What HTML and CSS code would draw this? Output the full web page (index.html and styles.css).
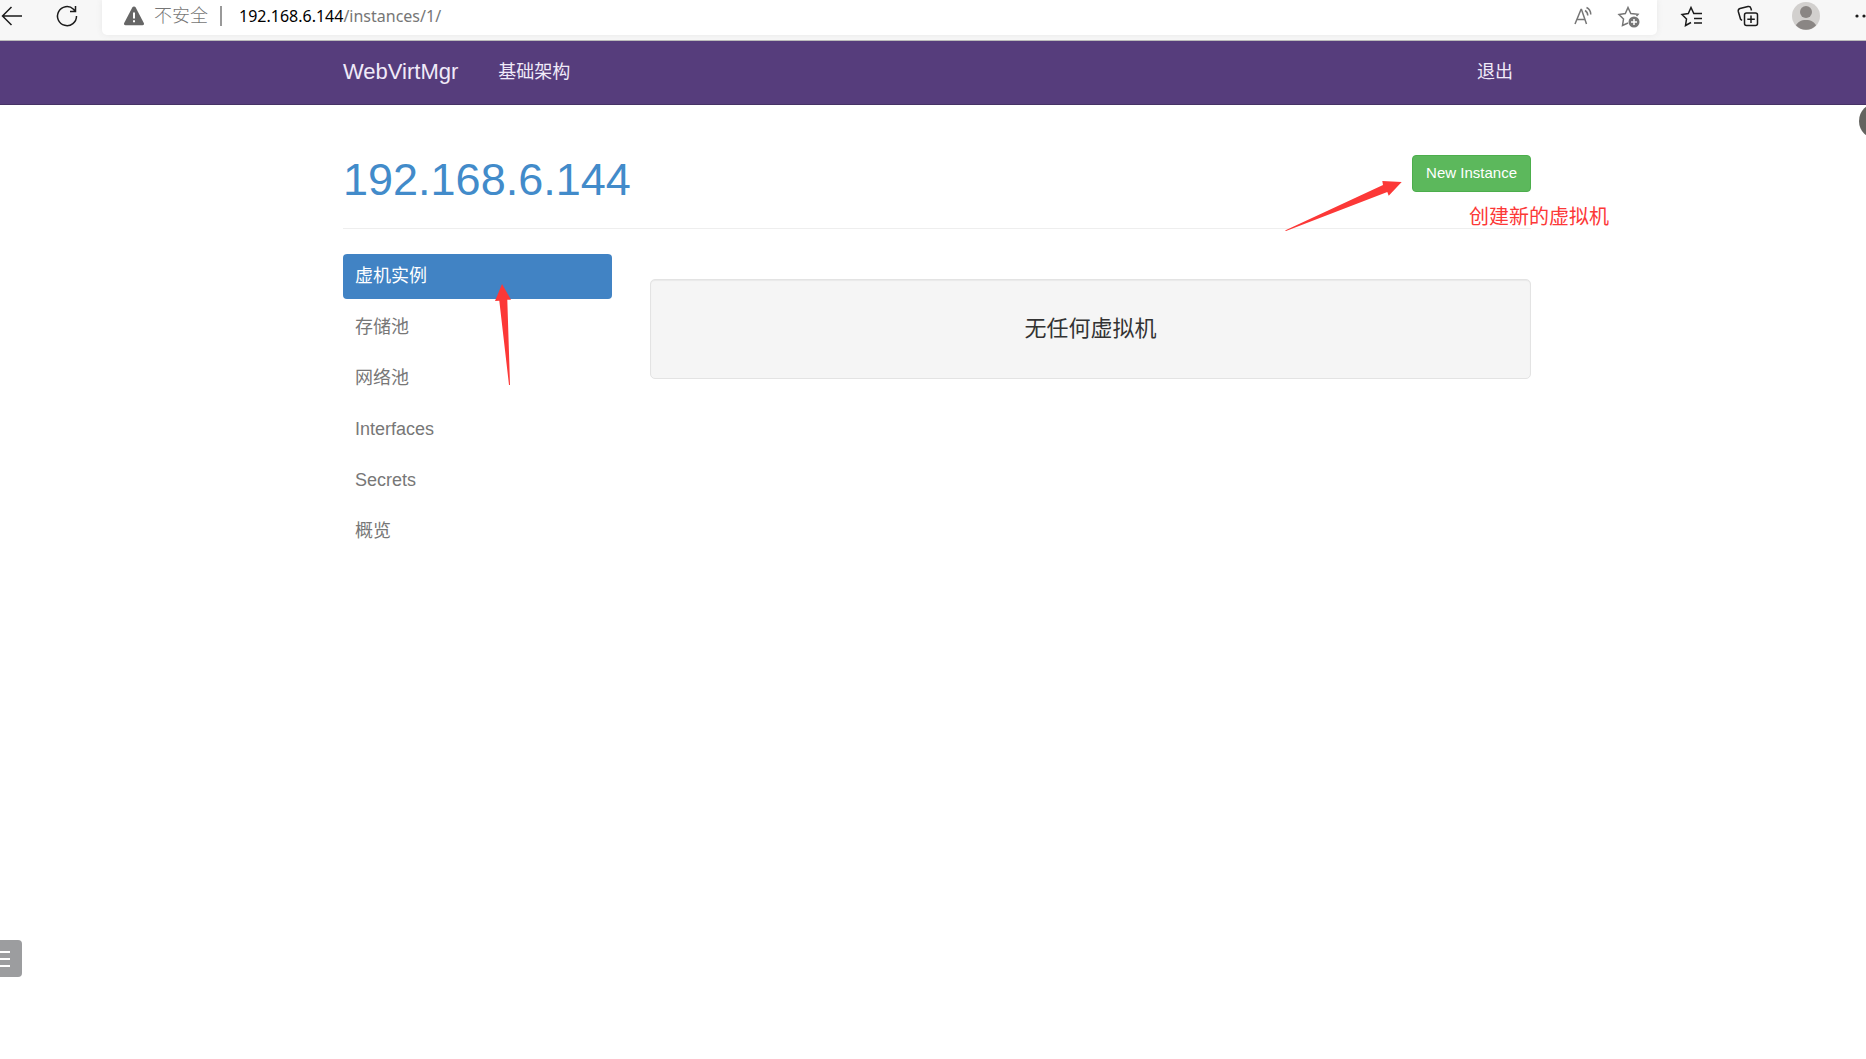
FILE: index.html
```
<!DOCTYPE html>
<html lang="zh-CN">
<head>
    <meta charset="UTF-8">
    <meta name="viewport" content="width=device-width, initial-scale=1.0">
    <title>WebVirtMgr</title>
    <link rel="stylesheet" href="styles.css">
</head>
<body>
<div class="toolbar">
    <div class="toolbar-nav">
        <button class="icon-button" aria-label="后退">
            <svg width="24" height="24" viewBox="0 0 24 24"><path d="M22 12H2.500M11.500 3L2.500 12l9 9"/></svg>
        </button>
        <button class="icon-button" aria-label="刷新">
            <svg width="24" height="24" viewBox="0 0 24 24"><path d="M21.500 12A9.500 9.500 0 1 1 18.500 5.200L20.500 7.500M20.500 2v5.500H15"/></svg>
        </button>
    </div>
    <div class="address-bar">
        <svg class="warning" width="22" height="22" viewBox="0 0 22 22">
            <path class="solid" d="M11 1.500c.8 0 1.300.4 1.700 1L20.800 18c.6 1.200 0 2.300-1.300 2.300h-17C1.200 20.300.6 19.200 1.200 18L9.300 2.500c.4-.6.900-1 1.700-1z"/>
            <path class="mark" d="M11 7.500v6M11 15.300v2"/>
        </svg>
        <span class="insecure">不安全</span>
        <span class="separator"></span>
        <div class="url"><span class="host">192.168.6.144</span>/instances/1/</div>
        <button class="icon-button muted" aria-label="大声朗读">
            <svg width="22" height="24" viewBox="0 0 22 24"><path d="M2 20L8 5.500h.5L13.500 20M4 15.500h8M12 6.500c1.800 1 2.700 2.800 2.800 5M13.500 3.500c2.600 1.300 4.200 3.800 4.300 7"/></svg>
        </button>
        <button class="icon-button muted" aria-label="添加到收藏夹">
            <svg width="24" height="24" viewBox="0 0 24 24">
                <path d="M11 19l-5.500 2.500 1-6.500L2 10.500l6.300-1L11 3.500l2.800 6 7.200.8-1.500 1.700"/>
                <circle class="solid" cx="17" cy="18" r="5.500"/>
                <path class="mark" d="M17 15v6M14 18h6"/>
            </svg>
        </button>
    </div>
    <div class="toolbar-actions">
        <button class="icon-button" aria-label="收藏夹">
            <svg width="24" height="24" viewBox="0 0 24 24"><path d="M11 18.500L5.500 21.500l1-6.500L2 10.500l6.300-1L11 3.500l2.800 6H22M14 14.500h8M14 19h8"/></svg>
        </button>
        <button class="icon-button" aria-label="集锦">
            <svg width="24" height="24" viewBox="0 0 24 24">
                <rect x="8.500" y="9" width="13" height="12.500" rx="2"/>
                <path d="M15 11.500v7.500M11.300 15.200h7.500M6 16.500L4.500 15 2.300 7.500C2 6 2.500 5 4 4.500L12 2.500c1.500-.3 2.500.3 2.800 1.500l.7 2.500"/>
            </svg>
        </button>
        <button class="icon-button avatar" aria-label="用户">
            <svg width="28" height="28" viewBox="0 0 28 28">
                <circle class="avatar-back" cx="14" cy="14" r="14"/>
                <circle class="avatar-person" cx="14" cy="10" r="6"/>
                <path class="avatar-person" d="M4 23.500C5.500 20 9 18 14 18s8.500 2 10 5.500A14 14 0 0 1 4 23.500z"/>
            </svg>
        </button>
        <button class="icon-button more" aria-label="更多">
            <svg width="24" height="24" viewBox="0 0 24 24"><g class="dots"><circle cx="5" cy="12" r="1.600"/><circle cx="12" cy="12" r="1.600"/><circle cx="19" cy="12" r="1.600"/></g></svg>
        </button>
    </div>
</div>

<header class="navbar">
    <div class="container">
        <a href="#" class="brand">WebVirtMgr</a>
        <a href="#" class="nav-link">基础架构</a>
        <a href="#" class="nav-link logout">退出</a>
    </div>
</header>

<main class="page">
    <div class="container">
        <div class="page-header">
            <h1><a href="#">192.168.6.144</a></h1>
            <button class="new-instance">New Instance</button>
            <svg class="arrow arrow-right" width="118" height="52" viewBox="0 0 118 52"><path d="M0 50.500L98 5 97.300 1l19.400 1-13 13.700-1.400-3.700L1 51z"/></svg>
            <span class="note">创建新的虚拟机</span>
        </div>
        <div class="content">
            <nav class="sidebar">
                <a href="#" class="active">虚机实例</a>
                <a href="#">存储池</a>
                <a href="#">网络池</a>
                <a href="#">Interfaces</a>
                <a href="#">Secrets</a>
                <a href="#">概览</a>
                <svg class="arrow arrow-up" width="18" height="104" viewBox="0 0 18 104"><path d="M8 1l9 15.700h-3.700L16 102h-1L5.300 17.700 1 18z"/></svg>
            </nav>
            <div class="well">无任何虚拟机</div>
        </div>
    </div>
</main>

<button class="side-menu" aria-label="菜单"><i></i><i></i><i></i></button>
<button class="side-handle" aria-label="展开"></button>
</body>
</html>
```
FILE: styles.css
```
* {
    box-sizing: border-box;
}
body {
    margin: 0;
    min-height: 100vh;
    overflow-x: hidden;
    background-color: #fff;
    color: #333;
    font-family: "Liberation Sans", Arial, "Noto Sans CJK SC", sans-serif;
    font-size: 18px;
    line-height: 24px;
}
a {
    text-decoration: none;
}
button {
    border: none;
    padding: 0;
    font-family: inherit;
    cursor: pointer;
}

/* browser toolbar */
.toolbar {
    display: flex;
    height: 41px;
    overflow: hidden;
    background-color: #f7f7f7;
    border-bottom: 1px solid #bbb;
}
.toolbar-nav,
.toolbar-actions {
    display: flex;
    align-items: center;
    height: 32px;
}
.toolbar-nav {
    gap: 31px;
    width: 102px;
}
.toolbar-actions {
    gap: 32px;
    width: 209px;
    padding-left: 23px;
}
.icon-button {
    display: flex;
    flex-shrink: 0;
    background: none;
}
.icon-button svg {
    fill: none;
    stroke: #1b1b1b;
    stroke-width: 1.5px;
}
.icon-button.muted svg {
    stroke: #767676;
}
.address-bar {
    display: flex;
    flex: 1;
    align-items: center;
    height: 35px;
    padding: 0 16px 3px 21px;
    border-radius: 0 0 5px 5px;
    background-color: #fff;
    box-shadow: 0 0 6px #e8e8e8;
    color: #767676;
}
.warning .solid {
    fill: #666;
}
.warning .mark {
    stroke: #fff;
    stroke-width: 2px;
}
.icon-button .solid {
    fill: #767676;
    stroke: none;
}
.icon-button .mark {
    stroke: #fff;
}
.insecure {
    margin-left: 9px;
    font-weight: 300;
}
.separator {
    width: 2px;
    height: 20px;
    margin: 0 17px 0 12px;
    background-color: #999;
}
.url {
    flex: 1;
    font-family: "Noto Sans", sans-serif;
    font-size: 16px;
}
.host {
    color: #000;
}
.address-bar .icon-button + .icon-button {
    margin-left: 22px;
}
.icon-button .avatar-back {
    fill: #d2d0ce;
    stroke: none;
}
.icon-button .avatar-person {
    fill: #8a8684;
    stroke: none;
}
.more .dots {
    fill: #1b1b1b;
    stroke: none;
}

/* navigation */
.navbar,
.page {
    padding-left: 8px;
}
.container {
    max-width: 1188px;
    margin: 0 auto;
}
.navbar {
    background-color: #563d7c;
    border-bottom: 1px solid #463265;
}
.navbar .container {
    display: flex;
    align-items: center;
    height: 63px;
    padding: 0 18px 2px 0;
}
.navbar a {
    color: #f0eaf8;
}
.brand {
    font-size: 22px;
}
.nav-link {
    margin-left: 40px;
}
.logout {
    margin-left: auto;
}

/* page */
.page-header {
    position: relative;
    display: flex;
    align-items: flex-start;
    justify-content: space-between;
    padding: 50px 0 23px;
    border-bottom: 1px solid #eee;
}
h1 {
    margin: 0;
    font-size: 45px;
    font-weight: 400;
    line-height: 50px;
}
h1 a {
    color: #428bca;
}
.new-instance {
    height: 37px;
    padding: 0 13px 2px;
    border: 1px solid #4cae4c;
    border-radius: 4px;
    background-color: #5cb85c;
    color: #fff;
    font-size: 15px;
}
.arrow {
    position: absolute;
    fill: #fc3837;
}
.arrow-right {
    top: 75px;
    right: 128px;
}
.note {
    position: absolute;
    top: 100px;
    right: -78px;
    color: #fc3837;
    font-size: 20px;
}
.content {
    display: flex;
    align-items: flex-start;
    gap: 38px;
    padding-top: 25px;
}
.sidebar {
    position: relative;
    display: flex;
    flex-direction: column;
    gap: 6px;
    width: 269px;
}
.sidebar a {
    height: 45px;
    padding: 10px 12px;
    border-radius: 4px;
    color: #777;
}
.sidebar .active {
    background-color: #4183c4;
    color: #fff;
}
.arrow-up {
    top: 29px;
    left: 151px;
}
.well {
    flex: 1;
    margin-top: 25px;
    padding: 37px 24px;
    border: 1px solid #e3e3e3;
    border-radius: 5px;
    background-color: #f5f5f5;
    box-shadow: inset 0 1px 1px rgba(0, 0, 0, 0.05);
    font-size: 22px;
    text-align: center;
}

/* floating controls at the window edges */
.side-menu {
    position: fixed;
    bottom: 82px;
    left: 0;
    display: flex;
    flex-direction: column;
    justify-content: center;
    gap: 5px;
    width: 22px;
    height: 37px;
    border-radius: 0 4px 4px 0;
    background-color: #9c9d9f;
}
.side-menu i {
    width: 10px;
    height: 2px;
    background-color: #fff;
}
.side-handle {
    position: fixed;
    top: 103px;
    right: -29px;
    width: 36px;
    height: 36px;
    border-radius: 50%;
    background-color: #646460;
}
```
